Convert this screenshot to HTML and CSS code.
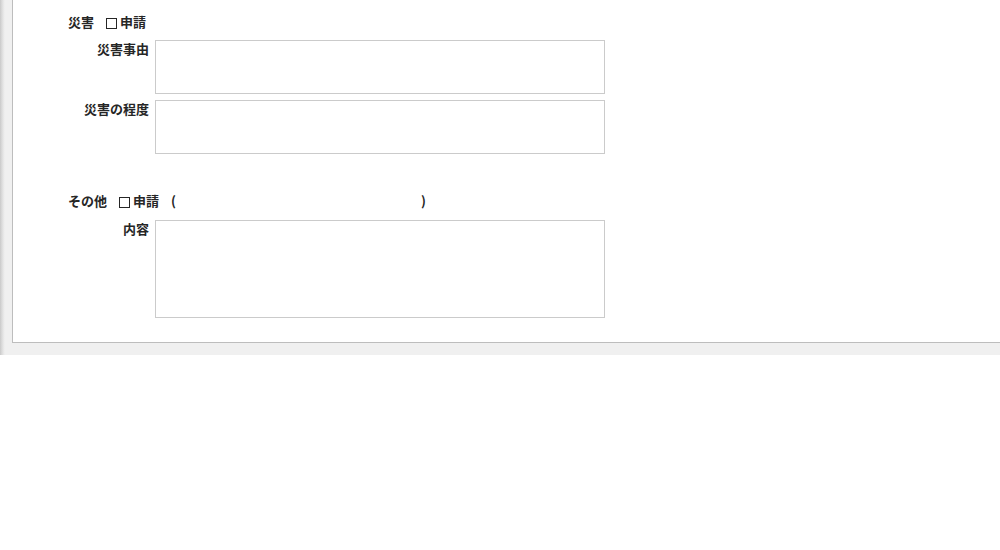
FILE: index.html
```html
<!DOCTYPE html>
<html lang="ja">
<head>
    <meta charset="UTF-8" />
    <meta name="viewport" content="width=device-width, initial-scale=1" />
    <title>申請内容</title>
    <link rel="stylesheet" href="styles.css">
</head>
<body>

<div class="frame">
  <div class="panel">

    <div class="section">
      <div class="section-head">
        <span class="section-title">災害</span>
        <span class="check" aria-hidden="true"></span>
        <span>申請</span>
      </div>
      <div class="field">
        <label class="field-label" for="saigai-jiyu">災害事由</label>
        <textarea id="saigai-jiyu" class="field-box"></textarea>
      </div>
      <div class="field">
        <label class="field-label" for="saigai-teido">災害の程度</label>
        <textarea id="saigai-teido" class="field-box"></textarea>
      </div>
    </div>

    <div class="section section-other">
      <div class="section-head">
        <span class="section-title">その他</span>
        <span class="check" aria-hidden="true"></span>
        <span>申請</span>
        <span class="paren">(</span>
        <span class="paren-space"></span>
        <span>)</span>
      </div>
      <div class="field">
        <label class="field-label" for="sonota-naiyo">内容</label>
        <textarea id="sonota-naiyo" class="field-box tall"></textarea>
      </div>
    </div>

  </div>
</div>

</body>
</html>
```

FILE: styles.css
```css
* { box-sizing: border-box; }
body {
  margin: 0;
  background: #fff;
  font-family: "Noto Sans CJK JP", "Noto Sans", sans-serif;
  font-size: 13px;
  font-weight: 700;
  color: #262626;
}

.frame {
  padding: 0 0 12px 12px;
  background: linear-gradient(to right, #c9c9c9 0, #dcdcdc 2px, #ebebeb 4px, #f0f0f0 5px);
}

.panel {
  background: #fff;
  border-left: 1px solid #bdbdbd;
  border-bottom: 1px solid #bdbdbd;
  padding: 13px 0 24px 55px;
}

.section-head {
  display: flex;
  align-items: center;
  height: 18px;
  line-height: 18px;
  margin-bottom: 9px;
}
.section-title { margin-right: 12px; }

.check {
  width: 11px;
  height: 11px;
  border: 1px solid #262626;
  margin: 2px 3px 0 0;
}

.paren { margin-left: 12px; }
.paren-space { width: 245px; }

.field {
  display: flex;
  align-items: flex-start;
  gap: 6px;
  margin-bottom: 6px;
}
.field-label {
  width: 81px;
  text-align: right;
  line-height: 17px;
}
.field-box {
  display: block;
  width: 450px;
  height: 54px;
  margin: 0;
  padding: 2px;
  border: 1px solid #cbcbcb;
  resize: none;
  font: inherit;
  font-weight: 400;
  background: #fff;
}
.field-box.tall { height: 98px; }

.section-other { margin-top: 38px; }
.section-other .section-head { margin-bottom: 10px; }
.section-other .field { margin-bottom: 0; }
```
